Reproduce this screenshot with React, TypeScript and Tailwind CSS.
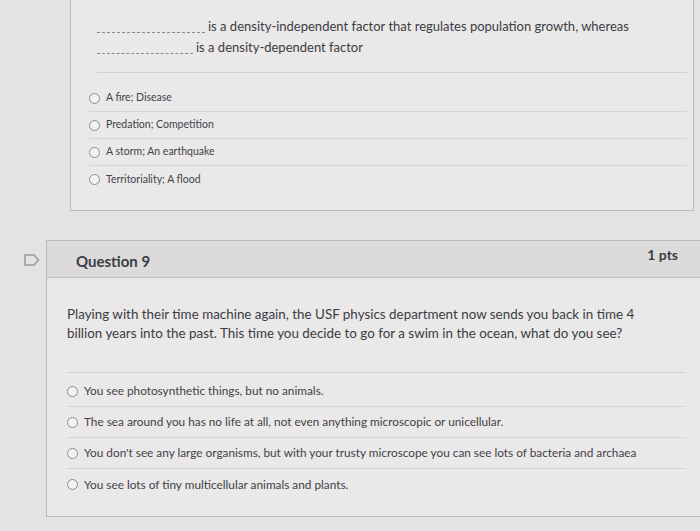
const firstOptions = ['A fire; Disease', 'Predation; Competition', 'A storm; An earthquake', 'Territoriality; A flood']

const secondOptions = [
  'You see photosynthetic things, but no animals.',
  'The sea around you has no life at all, not even anything microscopic or unicellular.',
  "You don't see any large organisms, but with your trusty microscope you can see lots of bacteria and archaea",
  'You see lots of tiny multicellular animals and plants.',
]

function Radio() {
  return <span className="inline-block w-[11px] h-[11px] rounded-full border border-[#8a8c8e] bg-[#f2f2f2] shrink-0" />
}

export default function App() {
  return (
    <div className="w-[700px] h-[531px] overflow-hidden bg-[#e4e2e3] font-['Lato','Open_Sans',sans-serif] text-[#3b3f44]">
      {/* previous question, cut off at the top */}
      <div className="ml-[70px] w-[624px] h-[211px] bg-[#eae8e9] border-x border-b border-[#bdbcbd] pl-[26px] pr-[6px] pt-[16px]">
        <div className="text-[13px] leading-[21px] text-[#3a3d41]">
          <div className="flex items-end">
            <span className="inline-block w-[108px] border-b border-dashed border-[#8a8a8a] mb-[4px] mr-[3px]" />
            <span>is a density-independent factor that regulates population growth, whereas</span>
          </div>
          <div className="flex items-end">
            <span className="inline-block w-[96px] border-b border-dashed border-[#8a8a8a] mb-[4px] mr-[3px]" />
            <span>is a density-dependent factor</span>
          </div>
        </div>
        <div className="mt-[14px] border-t border-[#d2d0d1]" />
        <div className="pt-[12px]">
          {firstOptions.map((o, i) => (
            <div
              key={o}
              className={`flex items-center gap-[6px] h-[27px] -ml-[8px] text-[10.5px] text-[#404448] ${i < 3 ? 'border-b border-[#d6d4d5]' : ''}`}
            >
              <Radio />
              <span>{o}</span>
            </div>
          ))}
        </div>
      </div>

      {/* Question 9 */}
      <div className="flex mt-[29px]">
        <div className="w-[46px] flex justify-end pr-[6px] pt-[14px]">
          <svg width="16" height="12" viewBox="0 0 16 12" fill="none" stroke="#9a9ca0" strokeWidth="1.6" strokeLinejoin="round">
            <path d="M1 1 H10 L14.5 6 L10 11 H1 Z" />
          </svg>
        </div>
        <div className="flex-1 h-[277px] bg-[#eae8e9] border border-r-0 border-[#b9b8b9]">
          <div className="h-[37px] bg-[#dcdadb] border-b border-[#c2c1c2] flex items-start justify-between pl-[29px] pr-[22px]">
            <span className="mt-[9px] text-[15px] font-bold text-[#3a3e44]">Question 9</span>
            <span className="mt-[3px] text-[14px] font-bold text-[#3a3e44]">1 pts</span>
          </div>
          <div className="pl-[20px] pr-[14px] pt-[27px]">
            <p className="text-[13.4px] leading-[19px] text-[#3a3d41] max-w-[590px]">
              Playing with their time machine again, the USF physics department now sends you back in time 4 billion years into the past. This time you decide to go for a swim in the ocean, what do you see?
            </p>
            <div className="mt-[29px] border-t border-[#d2d0d1]" />
            <div className="pt-[3px]">
              {secondOptions.map((o, i) => (
                <div
                  key={o}
                  className={`flex items-center gap-[6px] h-[31px] pl-[0px] text-[11.8px] text-[#3f4347] ${i < 3 ? 'border-b border-[#d6d4d5]' : ''}`}
                >
                  <Radio />
                  <span>{o}</span>
                </div>
              ))}
            </div>
          </div>
        </div>
      </div>
    </div>
  )
}
